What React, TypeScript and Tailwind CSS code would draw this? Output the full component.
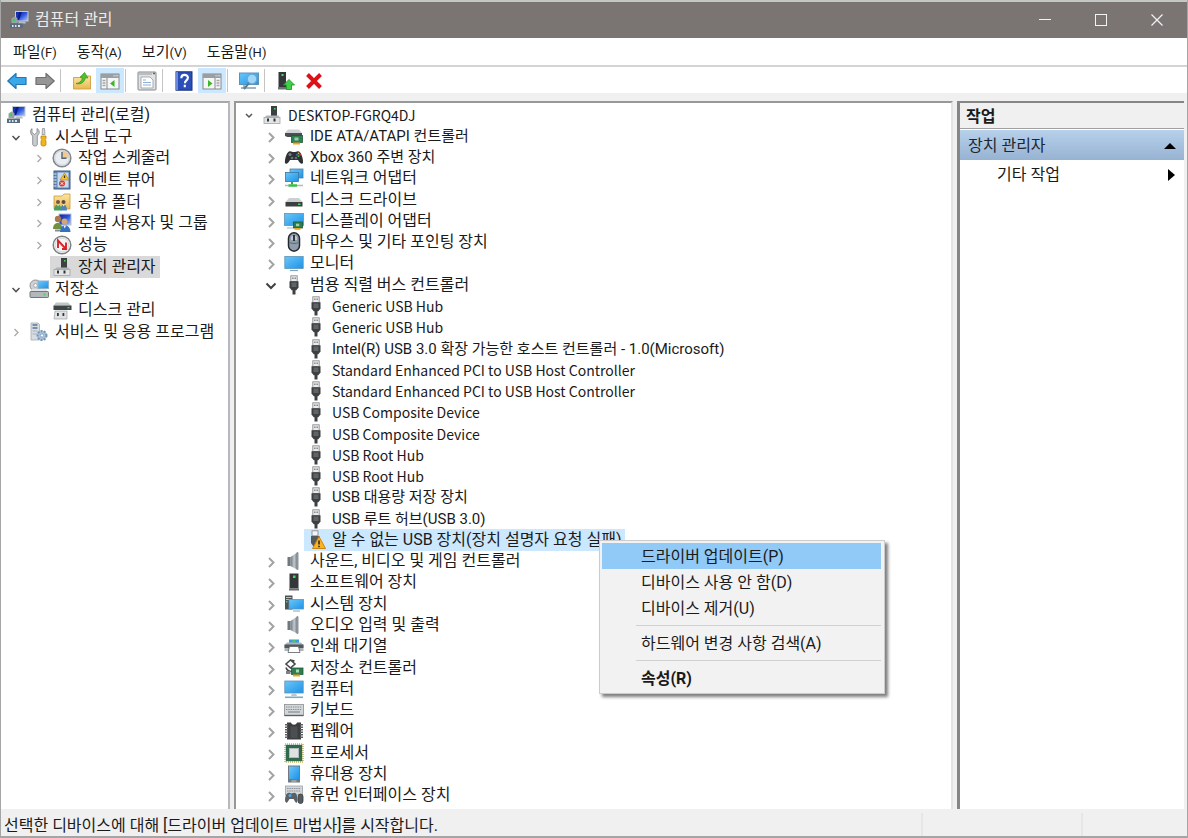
import React from "react";

type IconProps = { children: React.ReactNode };

const Svg = ({ children }: IconProps) => (
  <svg viewBox="0 0 20 20" className="h-5 w-5 shrink-0" aria-hidden="true">
    {children}
  </svg>
);

/* ---------- shared icon pieces ---------- */

const Gradients = () => (
  <svg className="absolute h-0 w-0" aria-hidden="true">
    <defs>
      <linearGradient id="screen" x1="0" y1="0" x2="1" y2="1">
        <stop offset="0" stopColor="#6cc6f7" />
        <stop offset="1" stopColor="#1c93ea" />
      </linearGradient>
      <linearGradient id="metal" x1="0" y1="0" x2="1" y2="0">
        <stop offset="0" stopColor="#6e7780" />
        <stop offset="0.5" stopColor="#c3c9cf" />
        <stop offset="1" stopColor="#5d656e" />
      </linearGradient>
      <linearGradient id="folder" x1="0" y1="0" x2="0" y2="1">
        <stop offset="0" stopColor="#fbe6a2" />
        <stop offset="1" stopColor="#e9b851" />
      </linearGradient>
      <linearGradient id="navy" x1="0" y1="0" x2="1" y2="1">
        <stop offset="0" stopColor="#0a1f9c" />
        <stop offset="0.5" stopColor="#2b52dd" />
        <stop offset="1" stopColor="#b5cffa" />
      </linearGradient>
    </defs>
  </svg>
);

const Card = () => (
  <g>
    <rect x="9.5" y="11" width="9" height="6" fill="#2e7d4f" stroke="#1d5a37" strokeWidth="0.8" />
    <rect x="12" y="12.7" width="3.2" height="2.5" fill="#9fd3b0" />
    <rect x="10.5" y="17" width="6" height="1.8" fill="#f0a41c" />
  </g>
);

/* ---------- left tree icons ---------- */

const ComputerManagementIcon = () => (
  <Svg>
    <rect x="6.5" y="1.5" width="12.5" height="9.5" fill="url(#navy)" stroke="#c3cad3" />
    <path d="M10 2h3l-3 8H7.500z" fill="#0b1c8a" />
    <path d="M2.500 8.500l3-2 3 1.500v5h-6z" fill="#9aa1a7" />
    <circle cx="5" cy="10" r="1.300" fill="#3fd04b" />
    <path d="M10 11.500h6l1 2H9z" fill="#b9bec4" />
    <rect x="1" y="13.500" width="13" height="4.500" rx="0.500" fill="#596d7f" />
    <path d="M3 15h1.500v2H3zM6 15h1.500v2H6zM9 15h2v2H9z" fill="#dbe5ee" />
  </Svg>
);

const ToolsIcon = () => (
  <Svg>
    <path
      d="M3 1.500v4l2.500 2 2.500-2v-4c2 1 2.600 3 2 5L8.300 9v8.500c0 2-4.600 2-4.600 0V9C1 6.500 1 3 3 1.500z"
      fill="#c9ccce"
      stroke="#7d8285"
      strokeWidth="0.800"
    />
    <path d="M13.500 1.500h2l.5 6h-3z" fill="#d5d8da" stroke="#84898c" strokeWidth="0.700" />
    <path d="M12 9h5v2.500l-.8 1 .8 1.500v3.500c0 2-5 2-5 0V14l.8-1.500-.8-1z" fill="#f2b51d" stroke="#b47a06" strokeWidth="0.700" />
  </Svg>
);

const ClockIcon = () => (
  <Svg>
    <circle cx="10" cy="10" r="8.800" fill="#e9edf2" stroke="#83878c" strokeWidth="1.600" />
    <path d="M10 10V2.800a7.200 7.200 0 0 1 7.200 7.200z" fill="#f3c98a" />
    <circle cx="10" cy="10" r="7.200" fill="none" stroke="#c7cdd4" strokeWidth="0.800" />
    <path d="M10 4v6.300h4.500" fill="none" stroke="#52637a" strokeWidth="1.400" />
  </Svg>
);

const EventViewerIcon = () => (
  <Svg>
    <rect x="2" y="1" width="16" height="18" fill="#5f84b3" stroke="#3f5d85" />
    <rect x="5.500" y="2.500" width="11" height="15" fill="#c7daf0" />
    <path d="M1.500 4h3M1.500 7h3M1.500 10h3M1.500 13h3M1.500 16h3" stroke="#dfe6ee" />
    <path d="M12.500 3l4.500 7H8z" fill="#f7c325" stroke="#b27d0a" strokeWidth="0.600" />
    <path d="M12.500 5.500v2.500" stroke="#333" strokeWidth="1.200" />
    <circle cx="10" cy="13.500" r="3" fill="#dd3b36" />
    <path d="M8.800 12.300l2.400 2.400M11.200 12.300l-2.400 2.400" stroke="#fff" />
  </Svg>
);

const SharedFolderIcon = () => (
  <Svg>
    <path d="M2 4h8l2-2h6v15H2z" fill="url(#folder)" stroke="#c99a3c" strokeWidth="0.800" />
    <circle cx="6" cy="10" r="2" fill="#7b5638" />
    <circle cx="11.500" cy="10" r="2" fill="#5f4a3f" />
    <path d="M2 18.500c0-8 7.500-8 7.500 0z" fill="#45a05e" />
    <path d="M8.500 18.500c0-8 6.500-8 6.500 0z" fill="#4f83bd" />
    <path d="M5 12.500h2l-1 2zM10.700 12.500h2l-1 2z" fill="#fff" />
  </Svg>
);

const UsersIcon = () => (
  <Svg>
    <rect x="7" y="1" width="12" height="11" fill="url(#navy)" stroke="#b8c3d0" />
    <circle cx="6" cy="6" r="3.200" fill="#a77b4d" />
    <circle cx="12.500" cy="8.500" r="3" fill="#d2a678" />
    <path d="M1 16c0-8 9-8 9.500 0z" fill="#71913f" />
    <path d="M8 19c0-9 10-9 10.500 0z" fill="#3372bf" />
    <path d="M11.500 12.500h2.500l-1.200 3z" fill="#fff" />
    <path d="M3 17.500h5" stroke="#878e93" strokeWidth="2" />
  </Svg>
);

const PerformanceIcon = () => (
  <Svg>
    <circle cx="10" cy="10" r="8.800" fill="#fff" stroke="#7d8184" strokeWidth="1.500" />
    <circle cx="10" cy="10" r="7" fill="#f4f4f4" stroke="#cfd2d4" />
    <path d="M6 13V5.500l7.500 8M14 7.500v6.500h-4" fill="none" stroke="#d8232a" strokeWidth="1.900" />
  </Svg>
);

const DeviceManagerIcon = () => (
  <Svg>
    <rect x="9" y="1" width="6" height="11" fill="#3c4043" />
    <rect x="12" y="3" width="1.600" height="1.600" fill="#49cf55" />
    <path d="M4.500 10.500h12l1.500 2.500H2z" fill="#aeb3b6" />
    <rect x="2" y="12.500" width="16" height="6" fill="#e2e4e5" stroke="#a2a6a8" strokeWidth="0.800" />
    <path d="M5 13.500h2v3H5zM11.500 13.500h2v3h-2z" fill="#303437" />
  </Svg>
);

const StorageIcon = () => (
  <Svg>
    <circle cx="6.500" cy="6.500" r="5.500" fill="#cfd2d4" stroke="#8d9295" />
    <circle cx="6.500" cy="6.500" r="1.800" fill="#fff" stroke="#8d9295" strokeWidth="0.700" />
    <rect x="9" y="2" width="10.500" height="7.500" fill="url(#screen)" stroke="#8eb1cc" />
    <path d="M3 10h14l2 3H1z" fill="#e3e5e6" />
    <rect x="1" y="12.500" width="18.500" height="6" rx="0.800" fill="#b3b8bb" stroke="#666c70" strokeWidth="0.900" />
    <rect x="14.500" y="14.500" width="2" height="2" fill="#49d65a" />
  </Svg>
);

const DiskManagementIcon = () => (
  <Svg>
    <path d="M4 2.500h12l3 3H1.500z" fill="#c1c5c8" />
    <rect x="1.500" y="5.500" width="18" height="4.500" fill="#3f4447" />
    <rect x="15.500" y="7" width="2" height="1.400" fill="#46cf50" />
    <path d="M3 11h12v8H2z" fill="#dfe1e3" stroke="#9fa4a7" strokeWidth="0.700" />
    <path d="M5 13h1.800v3H5zM10.500 13h1.800v3h-1.800z" fill="#35393c" />
  </Svg>
);

const ServicesIcon = () => (
  <Svg>
    <path d="M2 1h7l1.500 1.500V18H2z" fill="#d8dde2" stroke="#9aa3ac" strokeWidth="0.700" />
    <path d="M3.500 3h5M3.500 6h5" stroke="#55779b" strokeWidth="1.400" />
    <path d="M3.500 9h5M3.500 12h5" stroke="#a7b2bd" />
    <circle cx="13" cy="13.500" r="4.500" fill="#a9c2db" stroke="#7896b4" strokeWidth="2" strokeDasharray="2 1.200" />
    <circle cx="13" cy="13.500" r="1.600" fill="#fff" stroke="#7896b4" strokeWidth="0.700" />
  </Svg>
);

/* ---------- device icons ---------- */

const IdeIcon = () => (
  <Svg>
    <path d="M4 3.500h11l3 3.500H1z" fill="#cfd2d4" />
    <path d="M1 7h17v4H3.500L1 10z" fill="#4a4f52" />
    <rect x="7.500" y="9.500" width="11" height="7" fill="#2e8052" stroke="#1e5937" strokeWidth="0.800" />
    <rect x="10.500" y="11.500" width="4" height="3" fill="#8fd0a4" />
    <rect x="9" y="16.500" width="7" height="2" fill="#f0a41c" />
  </Svg>
);

const GamepadIcon = () => (
  <Svg>
    <path
      d="M5 4.500C6.500 3.500 8 5 10 5s3.500-1.500 5-.5c2.500 1 4.500 8.500 4 11.500-1 2-3.500 0-5-3H6c-1.500 3-4 5-5 3C.5 13 2.500 5.500 5 4.500z"
      fill="#2f3235"
    />
    <circle cx="6" cy="7.500" r="1.500" fill="#7b8084" />
    <circle cx="8" cy="11" r="1.300" fill="#696e72" />
    <circle cx="12" cy="11" r="1.300" fill="#696e72" />
    <circle cx="14.500" cy="6.300" r="0.900" fill="#e7b92e" />
    <circle cx="13" cy="7.800" r="0.900" fill="#3a78d8" />
    <circle cx="16" cy="7.800" r="0.900" fill="#d83a3a" />
    <circle cx="14.500" cy="9.200" r="0.900" fill="#46b34a" />
  </Svg>
);

const NetworkIcon = () => (
  <Svg>
    <rect x="6" y="1" width="13" height="9" fill="url(#screen)" stroke="#4b7fa5" strokeWidth="0.800" />
    <rect x="1.500" y="4.500" width="13" height="9" fill="url(#screen)" stroke="#3a77a4" strokeWidth="0.800" />
    <path d="M8 13.500v3" stroke="#4f9c4f" strokeWidth="2" />
    <path d="M1 17.500h18" stroke="#b4bbc0" strokeWidth="1.600" />
    <path d="M4.500 17.500h8.500" stroke="#35bf45" strokeWidth="2.400" />
  </Svg>
);

const DriveIcon = () => (
  <Svg>
    <path d="M5 8h10l3.500 4h-17z" fill="#ccd0d3" />
    <rect x="1.500" y="12" width="17" height="4.500" fill="#3b3f42" />
    <rect x="14" y="13.500" width="2.500" height="1.500" fill="#4ed35a" />
  </Svg>
);

const DisplayIcon = () => (
  <Svg>
    <rect x="0.500" y="2.500" width="19" height="12" fill="url(#screen)" stroke="#5d93b8" strokeWidth="0.800" />
    <path d="M3 17h6" stroke="#9eb7c8" />
    <Card />
  </Svg>
);

const MouseIcon = () => (
  <Svg>
    <rect x="4.500" y="0.800" width="11" height="18.400" rx="5.500" fill="#8f9cab" stroke="#23282d" strokeWidth="1.500" />
    <path d="M7 8V5.500C7 3 13 3 13 5.500V8z" fill="#c3ccd6" />
    <path d="M10 3v6" stroke="#23282d" strokeWidth="1.800" />
    <path d="M5.500 10.500c2 1.300 7 1.300 9 0" fill="none" stroke="#5e6976" />
  </Svg>
);

const MonitorIcon = () => (
  <Svg>
    <rect x="0.800" y="3.500" width="18.400" height="12" fill="url(#screen)" stroke="#5d93b8" strokeWidth="0.800" />
    <path d="M6 17.500h8" stroke="#7fa5c0" strokeWidth="1.200" />
  </Svg>
);

const ComputerIcon = () => (
  <Svg>
    <rect x="0.800" y="2" width="18.400" height="12" fill="url(#screen)" stroke="#5d93b8" strokeWidth="0.800" />
    <path d="M8 14.500h4l1 2.500H7z" fill="#b8c7d2" />
    <path d="M1 18.300h18" stroke="#7fa8c6" strokeWidth="1.600" />
  </Svg>
);

const UsbIcon = () => (
  <Svg>
    <rect x="6.800" y="0.800" width="6.400" height="5.700" fill="#e9eaeb" stroke="#8b8f92" strokeWidth="0.900" />
    <path d="M8.300 2.500h1.200v1.500H8.300zM10.600 2.500h1.200v1.500h-1.200z" fill="#6e7275" />
    <path d="M5.500 6.200h9v6.300l-2.200 2.700H7.700l-2.200-2.700z" fill="#3d4042" />
    <path d="M7.500 7.500h5v4.500h-5z" fill="#606466" />
    <rect x="8.500" y="15" width="3" height="4.500" fill="#3d4042" />
  </Svg>
);

const UsbWarningIcon = () => (
  <Svg>
    <rect x="6" y="0.800" width="6" height="5" fill="#f4f5f6" stroke="#8b8f92" strokeWidth="0.900" />
    <path d="M5 6h8.500v7L11 16.500H7.500L5 13z" fill="#55595b" />
    <path d="M13 6.500l6.500 12h-13z" fill="#fbb41e" stroke="#c77c0a" strokeWidth="0.900" />
    <path d="M13 10.500v4M13 15.700v1.500" stroke="#222" strokeWidth="1.500" />
  </Svg>
);

const SpeakerIcon = () => (
  <Svg>
    <rect x="3.500" y="6" width="3" height="9" fill="#70787f" />
    <path d="M6.500 6L14 1v18l-7.500-4z" fill="url(#metal)" />
    <path d="M12.500 1.500h2v17h-2z" fill="#8d959c" />
  </Svg>
);

const SoftwareIcon = () => (
  <Svg>
    <rect x="5.500" y="1.500" width="9" height="15" fill="#34373a" />
    <rect x="9" y="3.500" width="2.500" height="2.500" fill="#3fe04d" />
    <rect x="5" y="16.500" width="10" height="2" fill="#6a6e71" />
  </Svg>
);

const SystemIcon = () => (
  <Svg>
    <rect x="1" y="1.500" width="7.500" height="14" fill="#4d5255" />
    <path d="M2 3.500h5.500M2 5.500h5.500" stroke="#b9bec1" />
    <rect x="2" y="7" width="1.500" height="1.500" fill="#43d652" />
    <rect x="5" y="5.500" width="14.500" height="9.500" fill="url(#screen)" stroke="#5d93b8" strokeWidth="0.800" />
    <path d="M9 17h7" stroke="#9ab3c4" strokeWidth="1.200" />
  </Svg>
);

const PrinterIcon = () => (
  <Svg>
    <rect x="5" y="3.500" width="10" height="4" fill="#3d9be3" />
    <rect x="8.500" y="4" width="3" height="2.500" fill="#3ecb5f" />
    <path d="M3 6.500h14l2.500 2.500V15H.5V9z" fill="#aeb3b7" />
    <path d="M.5 8.500h19V12H.5z" fill="#53585c" />
    <path d="M5.500 10.500h9l1.500 6H4z" fill="#fff" stroke="#5b6064" strokeWidth="0.800" />
  </Svg>
);

const StorageControllerIcon = () => (
  <Svg>
    <path d="M6.500 2L2 6l4.500 4L11 6zM6.500 2l4 1M2 9.500c1 3.500 3 4 6 4" fill="none" stroke="#46494b" strokeWidth="1.600" />
    <rect x="7.500" y="10" width="11.500" height="6.500" fill="#2e7d4f" stroke="#1d5a37" strokeWidth="0.800" />
    <rect x="12" y="11.500" width="3" height="3" fill="#a4d9b4" />
    <path d="M2 14.500h4.500" stroke="#7c8184" strokeWidth="3" />
    <rect x="9" y="16.500" width="7" height="2" fill="#f0a41c" />
  </Svg>
);

const KeyboardIcon = () => (
  <Svg>
    <rect x="0.500" y="4.500" width="19" height="11" fill="#d3d7da" stroke="#8b9095" strokeWidth="0.800" />
    <path d="M2 7h16M2 9.500h16" stroke="#858b90" strokeWidth="1.200" strokeDasharray="1.400 0.900" />
    <path d="M4 12h12" stroke="#858b90" strokeWidth="1.200" />
    <path d="M.5 15.500h19" stroke="#5c6166" strokeWidth="1.400" />
  </Svg>
);

const FirmwareIcon = () => (
  <Svg>
    <path d="M3 1.500h4c1 3 5 3 6 0h4v17H3z" fill="#3b3d3f" />
    <path d="M2.500 3v15M17.500 3v15" stroke="#5d6163" strokeWidth="3" strokeDasharray="1.500 1" />
    <path d="M6.500 5.500h7V17h-7z" fill="#4c4f51" />
  </Svg>
);

const ProcessorIcon = () => (
  <Svg>
    <rect x="1" y="1" width="18" height="18" fill="none" stroke="#c5b567" strokeWidth="1.600" strokeDasharray="1 1" />
    <rect x="1.800" y="1.800" width="16.400" height="16.400" fill="#2f6a4d" />
    <rect x="5.500" y="5.500" width="9" height="9" fill="#dfe1e2" stroke="#b5b9bb" />
  </Svg>
);

const PortableIcon = () => (
  <Svg>
    <rect x="4" y="1.500" width="12" height="17" fill="#717a82" />
    <rect x="5" y="2.500" width="10" height="12.500" fill="url(#screen)" />
    <path d="M7.500 17h5" stroke="#c6ccd1" />
  </Svg>
);

const HidIcon = () => (
  <Svg>
    <rect x="1.500" y="1" width="17" height="9" fill="#d3d7da" stroke="#91969a" strokeWidth="0.700" />
    <path d="M3 3.500h14M3 6h14" stroke="#8b9196" strokeWidth="1.200" strokeDasharray="1.500 0.800" />
    <path
      d="M3 8.500c2-1.500 3 0 4.500 0s3-1.500 4.500 0c1.500 2 2 7 1 9-1.500 1-2.500-2-3.500-3.500h-4C4.500 15.500 3.500 18.500 2 17.500 0 16 1.500 10 3 8.500z"
      fill="#5a6066"
    />
    <circle cx="6" cy="10.500" r="1.500" fill="#4fa9ec" />
    <rect x="14" y="9" width="5" height="9.500" rx="2.500" fill="#555b61" stroke="#33383c" strokeWidth="0.800" />
  </Svg>
);

/* ---------- toolbar icons ---------- */

const ArrowIcon = ({ fill, stroke, back }: { fill: string; stroke: string; back?: boolean }) => (
  <Svg>
    <path
      d={back ? "M.8 10L9 2.500v4h10v7H9v4z" : "M19.200 10L11 2.500v4H1v7h10v4z"}
      fill={fill}
      stroke={stroke}
      strokeWidth="1.200"
      strokeLinejoin="round"
    />
  </Svg>
);

const UpFolderIcon = () => (
  <Svg>
    <path d="M1.500 6.500h6L9 5h9.500v13h-17z" fill="url(#folder)" stroke="#cf9f42" strokeWidth="0.900" />
    <path d="M4 12.500c3 0 5.500-2 6.500-5.500L8 6.500 12.500 1.500 16 7l-2.500-.3C12.500 11 9 14 4 12.500z" fill="#4cc22e" stroke="#34931d" strokeWidth="0.700" />
  </Svg>
);

const PaneIcon = ({ flip }: { flip?: boolean }) => (
  <Svg>
    <rect x="1" y="3" width="18" height="15" fill="#f5f6f7" stroke="#84898d" />
    <path d="M1 3h18v4H1z" fill="#9a9fa3" />
    <path d="M13.500 4.800h1M15.500 4.800h1M17.300 4.800h.8" stroke="#fff" />
    <path d={flip ? "M13 7v11" : "M7 7v11"} stroke="#84898d" />
    <path d={flip ? "M14.500 9.500h3M14.500 12h3M14.500 14.500h3" : "M2.500 9.500h3M2.500 12h3M2.500 14.500h3"} stroke="#a2a7ab" strokeWidth="1.300" />
    <path d={flip ? "M6 9v7l4.500-3.500z" : "M14.500 9v7L10 12.500z"} fill="#3fb52d" />
  </Svg>
);

const PropertiesIcon = () => (
  <Svg>
    <rect x="1" y="1" width="18" height="18" rx="0.800" fill="#e0e2e4" stroke="#84888b" />
    <path d="M2 3h13" stroke="#aeb2b5" strokeWidth="1.500" />
    <path d="M16 2.500h2" stroke="#5f6366" strokeWidth="1.500" />
    <path d="M4 6h9l3 3v8H4z" fill="#fff" stroke="#9aa6b1" strokeWidth="0.900" />
    <path d="M6 9h3M6 11.500h8M6 14h8" stroke="#8fb0cf" strokeWidth="1.100" />
  </Svg>
);

const HelpIcon = () => (
  <Svg>
    <rect x="2" y="0.800" width="16" height="18.400" fill="#2a4fb8" stroke="#1b317c" />
    <path d="M3 1v18" stroke="#7d9be8" strokeWidth="1.600" />
    <path d="M7.300 7.200c0-4.500 6.600-4.200 6.600-.4 0 2.500-3 2.700-3 5.400M10.800 13.800v2.400" fill="none" stroke="#fff" strokeWidth="2.100" />
  </Svg>
);

const ScanIcon = () => (
  <Svg>
    <rect x="0.500" y="2" width="19" height="11.500" fill="url(#screen)" stroke="#5d93b8" />
    <path d="M2 17h15M5 14v3" stroke="#829caf" strokeWidth="1.400" />
    <circle cx="13" cy="8" r="4.800" fill="#9ed7f8" stroke="#64aada" strokeWidth="1.200" />
    <path d="M10 12l-5 6" stroke="#5a7d97" strokeWidth="2" />
  </Svg>
);

const UpdateDriverIcon = () => (
  <Svg>
    <rect x="2.500" y="1" width="7.500" height="15" fill="#33373a" />
    <rect x="5.500" y="3" width="2" height="2" fill="#4fdd5a" />
    <rect x="2" y="16" width="9" height="2.500" fill="#6e7376" />
    <path d="M13 8.500l5.500 5.500h-3v4.500h-5V14h-3z" fill="#3fcf44" stroke="#279530" strokeWidth="0.900" />
  </Svg>
);

const DeleteIcon = () => (
  <Svg>
    <path d="M3.500 3.500l13 13M16.500 3.500l-13 13" stroke="#dd1219" strokeWidth="4" />
  </Svg>
);

/* ---------- data ---------- */

type Chevron = "open" | "closed" | "none";

interface TreeNode {
  label: string;
  level: number;
  chevron: Chevron;
  icon: React.FC;
  selected?: boolean;
}

const consoleTree: TreeNode[] = [
  { label: "시스템 도구", level: 0, chevron: "open", icon: ToolsIcon },
  { label: "작업 스케줄러", level: 1, chevron: "closed", icon: ClockIcon },
  { label: "이벤트 뷰어", level: 1, chevron: "closed", icon: EventViewerIcon },
  { label: "공유 폴더", level: 1, chevron: "closed", icon: SharedFolderIcon },
  { label: "로컬 사용자 및 그룹", level: 1, chevron: "closed", icon: UsersIcon },
  { label: "성능", level: 1, chevron: "closed", icon: PerformanceIcon },
  { label: "장치 관리자", level: 1, chevron: "none", icon: DeviceManagerIcon, selected: true },
  { label: "저장소", level: 0, chevron: "open", icon: StorageIcon },
  { label: "디스크 관리", level: 1, chevron: "none", icon: DiskManagementIcon },
  { label: "서비스 및 응용 프로그램", level: 0, chevron: "closed", icon: ServicesIcon },
];

const deviceTree: TreeNode[] = [
  { label: "DESKTOP-FGRQ4DJ", level: 0, chevron: "open", icon: DeviceManagerIcon },
  { label: "IDE ATA/ATAPI 컨트롤러", level: 1, chevron: "closed", icon: IdeIcon },
  { label: "Xbox 360 주변 장치", level: 1, chevron: "closed", icon: GamepadIcon },
  { label: "네트워크 어댑터", level: 1, chevron: "closed", icon: NetworkIcon },
  { label: "디스크 드라이브", level: 1, chevron: "closed", icon: DriveIcon },
  { label: "디스플레이 어댑터", level: 1, chevron: "closed", icon: DisplayIcon },
  { label: "마우스 및 기타 포인팅 장치", level: 1, chevron: "closed", icon: MouseIcon },
  { label: "모니터", level: 1, chevron: "closed", icon: MonitorIcon },
  { label: "범용 직렬 버스 컨트롤러", level: 1, chevron: "open", icon: UsbIcon },
  { label: "Generic USB Hub", level: 2, chevron: "none", icon: UsbIcon },
  { label: "Generic USB Hub", level: 2, chevron: "none", icon: UsbIcon },
  { label: "Intel(R) USB 3.0 확장 가능한 호스트 컨트롤러 - 1.0(Microsoft)", level: 2, chevron: "none", icon: UsbIcon },
  { label: "Standard Enhanced PCI to USB Host Controller", level: 2, chevron: "none", icon: UsbIcon },
  { label: "Standard Enhanced PCI to USB Host Controller", level: 2, chevron: "none", icon: UsbIcon },
  { label: "USB Composite Device", level: 2, chevron: "none", icon: UsbIcon },
  { label: "USB Composite Device", level: 2, chevron: "none", icon: UsbIcon },
  { label: "USB Root Hub", level: 2, chevron: "none", icon: UsbIcon },
  { label: "USB Root Hub", level: 2, chevron: "none", icon: UsbIcon },
  { label: "USB 대용량 저장 장치", level: 2, chevron: "none", icon: UsbIcon },
  { label: "USB 루트 허브(USB 3.0)", level: 2, chevron: "none", icon: UsbIcon },
  { label: "알 수 없는 USB 장치(장치 설명자 요청 실패)", level: 2, chevron: "none", icon: UsbWarningIcon, selected: true },
  { label: "사운드, 비디오 및 게임 컨트롤러", level: 1, chevron: "closed", icon: SpeakerIcon },
  { label: "소프트웨어 장치", level: 1, chevron: "closed", icon: SoftwareIcon },
  { label: "시스템 장치", level: 1, chevron: "closed", icon: SystemIcon },
  { label: "오디오 입력 및 출력", level: 1, chevron: "closed", icon: SpeakerIcon },
  { label: "인쇄 대기열", level: 1, chevron: "closed", icon: PrinterIcon },
  { label: "저장소 컨트롤러", level: 1, chevron: "closed", icon: StorageControllerIcon },
  { label: "컴퓨터", level: 1, chevron: "closed", icon: ComputerIcon },
  { label: "키보드", level: 1, chevron: "closed", icon: KeyboardIcon },
  { label: "펌웨어", level: 1, chevron: "closed", icon: FirmwareIcon },
  { label: "프로세서", level: 1, chevron: "closed", icon: ProcessorIcon },
  { label: "휴대용 장치", level: 1, chevron: "closed", icon: PortableIcon },
  { label: "휴먼 인터페이스 장치", level: 1, chevron: "closed", icon: HidIcon },
];

const menus = [
  { label: "파일", accessKey: "F" },
  { label: "동작", accessKey: "A" },
  { label: "보기", accessKey: "V" },
  { label: "도움말", accessKey: "H" },
];

const consoleIndent = ["pl-0", "pl-[23px]"];
const deviceIndent = ["pl-0", "pl-[22px]", "pl-[44px]"];

const labelFont = (label: string) => {
  if (!/[가-힣]/.test(label)) return "font-['Noto_Sans_CJK_KR',sans-serif] text-[14px]";
  return /^[A-Z]/.test(label) ? "text-[15px]" : "text-[16px]";
};

/* ---------- components ---------- */

const SmallChevron = ({ state }: { state: Chevron }) => (
  <svg viewBox="0 0 20 20" className="h-5 w-5 shrink-0" aria-hidden="true">
    {state === "closed" && <path d="M8.500 7l3.500 3.500L8.500 14" fill="none" stroke="#a9a9a9" strokeWidth="1.300" />}
    {state === "open" && <path d="M6.500 9l3.500 3.500L13.500 9" fill="none" stroke="#555" strokeWidth="1.600" />}
  </svg>
);

const BigChevron = ({ state, root }: { state: Chevron; root: boolean }) => (
  <svg viewBox="0 0 22 20" className="h-5 w-[22px] shrink-0" aria-hidden="true">
    {state === "closed" && <path d="M9 7l4.500 4.500L9 16" fill="none" stroke="#a3a3a3" strokeWidth="2" />}
    {state === "open" && root && <path d="M8 9l3 3 3-3" fill="none" stroke="#555" strokeWidth="1.500" />}
    {state === "open" && !root && <path d="M6.500 8.500L11 13l4.500-4.500" fill="none" stroke="#404040" strokeWidth="2" />}
  </svg>
);

const ToolButton = ({ label, active, children }: { label: string; active?: boolean; children: React.ReactNode }) => (
  <button
    aria-label={label}
    className={`flex h-[25px] w-7 items-center justify-center ${active ? "bg-[#cce8ff]" : "hover:bg-[#e5f3ff]"}`}
  >
    {children}
  </button>
);

const ToolSeparator = () => (
  <div className="w-[9px] pl-px">
    <div className="h-[23px] w-px bg-[#c4c4c4]" />
  </div>
);

const MenuEntry = ({ children, active, bold }: { children: React.ReactNode; active?: boolean; bold?: boolean }) => (
  <button
    role="menuitem"
    className={`flex h-[26px] w-full items-center pl-[39px] pt-0.5 text-left ${
      active ? "bg-[#91c9f7]" : "hover:bg-[#91c9f7]"
    } ${bold ? "font-bold" : ""}`}
  >
    {children}
  </button>
);

const MenuDivider = () => <div className="my-1 ml-[34px] h-px bg-[#d0d0d0]" />;

function ContextMenu() {
  return (
    <div
      role="menu"
      className="absolute left-[361px] top-[11px] z-10 w-[286px] border border-[#cccccc] bg-[#f2f2f2] py-0.5 pl-0.5 pr-[3px] shadow-[3px_3px_3px_rgba(0,0,0,0.5)]"
    >
      <MenuEntry active>드라이버 업데이트(P)</MenuEntry>
      <MenuEntry>디바이스 사용 안 함(D)</MenuEntry>
      <MenuEntry>디바이스 제거(U)</MenuEntry>
      <MenuDivider />
      <MenuEntry>하드웨어 변경 사항 검색(A)</MenuEntry>
      <MenuDivider />
      <MenuEntry bold>속성(R)</MenuEntry>
    </div>
  );
}

function TitleBar() {
  return (
    <header className="flex h-[38px] items-center border-t-2 border-[#c3c8c5] bg-[#7a7472] pl-2 pr-0.5 text-[#ececec]">
      <ComputerManagementIcon />
      <h1 className="ml-[6px] flex-1">컴퓨터 관리</h1>
      <div className="flex">
        <button aria-label="최소화" className="flex h-9 w-14 items-center justify-center">
          <svg viewBox="0 0 12 12" className="h-3 w-3">
            <path d="M0 5.500h12" stroke="#f3f3f3" />
          </svg>
        </button>
        <button aria-label="최대화" className="flex h-9 w-14 items-center justify-center">
          <svg viewBox="0 0 12 12" className="h-3 w-3">
            <rect x="0.500" y="0.500" width="11" height="11" fill="none" stroke="#f3f3f3" />
          </svg>
        </button>
        <button aria-label="닫기" className="flex h-9 w-14 items-center justify-center">
          <svg viewBox="0 0 12 12" className="h-3 w-3">
            <path d="M.5.500l11 11M11.500.500l-11 11" stroke="#f3f3f3" strokeWidth="1.200" />
          </svg>
        </button>
      </div>
    </header>
  );
}

function Toolbar() {
  return (
    <div className="flex h-[26px] items-center bg-white pl-0.5 pt-px">
      <ToolButton label="뒤로">
        <ArrowIcon back fill="#3aa7e8" stroke="#1d78b5" />
      </ToolButton>
      <ToolButton label="앞으로">
        <ArrowIcon fill="#969696" stroke="#6f6f6f" />
      </ToolButton>
      <ToolSeparator />
      <ToolButton label="한 수준 위로">
        <UpFolderIcon />
      </ToolButton>
      <ToolButton label="콘솔 트리 표시/숨기기" active>
        <PaneIcon />
      </ToolButton>
      <ToolSeparator />
      <ToolButton label="속성">
        <PropertiesIcon />
      </ToolButton>
      <ToolSeparator />
      <ToolButton label="도움말">
        <HelpIcon />
      </ToolButton>
      <ToolButton label="작업 창 표시/숨기기" active>
        <PaneIcon flip />
      </ToolButton>
      <ToolSeparator />
      <ToolButton label="하드웨어 변경 사항 검색">
        <ScanIcon />
      </ToolButton>
      <ToolSeparator />
      <ToolButton label="드라이버 업데이트">
        <UpdateDriverIcon />
      </ToolButton>
      <ToolButton label="디바이스 제거">
        <DeleteIcon />
      </ToolButton>
    </div>
  );
}

function ConsolePane() {
  return (
    <nav className="w-[229px] shrink-0 border-2 border-l-0 border-b-0 border-[#a3a9ae] border-r-[#b5b9bd] bg-white pl-[5px] pt-px">
      <ul role="tree" className="grid h-[239px] auto-rows-fr">
        <li role="treeitem" className="flex items-center gap-[6px]">
          <ComputerManagementIcon />
          <button>컴퓨터 관리(로컬)</button>
        </li>
        {consoleTree.map((node) => (
          <li key={node.label} role="treeitem" className={`flex items-center ${consoleIndent[node.level]}`}>
            <SmallChevron state={node.chevron} />
            <button
              className={`ml-px flex h-full items-center gap-[6px] whitespace-nowrap pl-0.5 pr-1 ${
                node.selected ? "bg-[#d9d9d9]" : ""
              }`}
            >
              <node.icon />
              {node.label}
            </button>
          </li>
        ))}
      </ul>
    </nav>
  );
}

function DevicePane() {
  return (
    <main className="ml-1 flex flex-1 flex-col border-2 border-b-0 border-[#969996] border-r-[#e3e3e3] bg-white pb-[3px] pl-0.5 pt-px">
      <ul role="tree" className="flex flex-1 flex-col">
        {deviceTree.map((node, index) => (
          <li
            key={index}
            role="treeitem"
            className={`relative flex max-h-6 min-h-[21px] flex-1 items-center ${deviceIndent[node.level]}`}
          >
            <BigChevron state={node.chevron} root={node.level === 0} />
            <button
              className={`flex h-full items-center gap-[6px] whitespace-nowrap pl-0.5 pr-1 ${labelFont(node.label)} ${
                node.selected ? "bg-[#cce8ff]" : ""
              }`}
            >
              <node.icon />
              {node.label}
            </button>
            {node.selected && <ContextMenu />}
          </li>
        ))}
      </ul>
    </main>
  );
}

function ActionsPane() {
  return (
    <aside className="ml-1 w-[227px] shrink-0 border-l-[3px] border-t-2 border-[#868686] bg-white">
      <h2 className="flex h-[26px] items-center border-b border-[#a0a0a0] bg-[#f0f0f0] pl-[6px] pt-0.5 font-bold">작업</h2>
      <button className="mt-px flex h-[30px] w-full items-center justify-between bg-linear-to-b from-[#b7d1eb] to-[#97b3d2] pl-2 pr-2 pt-0.5 text-[#1c2733]">
        장치 관리자
        <svg viewBox="0 0 12 6" className="h-[6px] w-3" aria-hidden="true">
          <path d="M6 0l6 6H0z" fill="#000" />
        </svg>
      </button>
      <button className="flex h-[28px] w-full items-center justify-between pl-[37px] pr-[9px] pt-0.5">
        기타 작업
        <svg viewBox="0 0 7 12" className="h-3 w-[7px]" aria-hidden="true">
          <path d="M0 0l7 6-7 6z" fill="#000" />
        </svg>
      </button>
    </aside>
  );
}

function App() {
  return (
    <div className="flex min-h-screen flex-col border-x border-b-2 border-[#a5a5a5] bg-[#f0f0f0] font-[Roboto,'Noto_Sans_CJK_KR',sans-serif] text-[16px] leading-5 text-[#1a1a1a]">
      <Gradients />
      <TitleBar />
      <div className="flex h-[29px] items-center gap-5 border-b-2 border-[#d4d4d4] bg-white pl-3 pt-0.5 text-[15px]">
        {menus.map((menu) => (
          <button key={menu.label}>
            {menu.label}
            <span className="text-[13px]">({menu.accessKey})</span>
          </button>
        ))}
      </div>
      <Toolbar />
      <div className="flex flex-1 pr-[3px] pt-2">
        <ConsolePane />
        <DevicePane />
        <ActionsPane />
      </div>
      <footer className="mt-1 flex h-[23px] items-center">
        <p className="flex-1 pl-[3px] pt-0.5">선택한 디바이스에 대해 [드라이버 업데이트 마법사]를 시작합니다.</p>
        <div className="h-full w-[160px] border-l-2 border-[#e6e6e6]" />
        <div className="h-full w-[106px] border-l-2 border-[#e6e6e6]" />
      </footer>
    </div>
  );
}

export default App;
